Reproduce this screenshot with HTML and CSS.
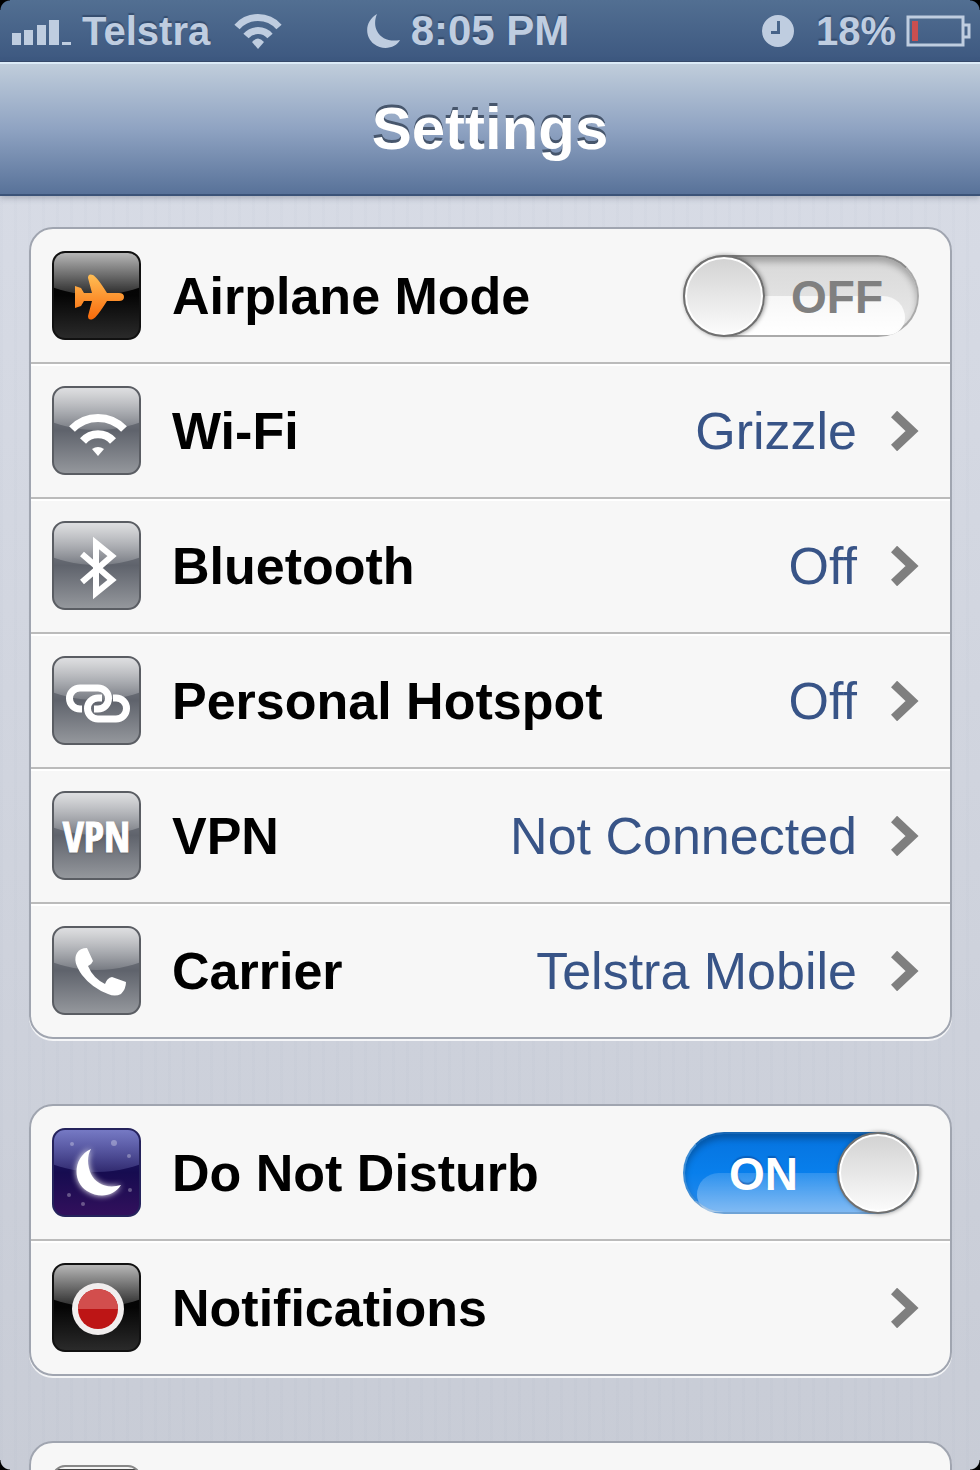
FILE: index.html
```
<!DOCTYPE html>
<html lang="en">

<head>
    <meta charset="utf-8">
    <meta name="viewport" content="width=device-width, initial-scale=1">
    <title>Settings</title>
    <link rel="stylesheet" href="styles.css">
</head>

<body>
    <div class="screen">
        <div class="status-bar">
            <div class="status-left">
                <svg class="signal" width="60" height="26" viewBox="0 0 60 26">
                    <path d="M0 13h9v12H0zM12 10h9v15h-9zM25 5h9v20h-9zM37 0h10v25h-10zM50 22h9v3h-9z" />
                </svg>
                <span>Telstra</span>
                <svg class="status-wifi" width="48" height="36" viewBox="0 0 48 36">
                    <path class="arc" d="M3 14A28 28 0 0 1 45 14M12 23A16 16 0 0 1 36 23" />
                    <path d="M18 29Q24 22 30 29L24 36z" />
                </svg>
                <svg class="status-moon" width="34" height="36" viewBox="0 0 34 36">
                    <path d="M10 1C-2 8-3 23 7 31C16 38 29 35 33 27C23 29 14 26 10 18C7 12 8 6 10 1z" />
                </svg>
            </div>
            <span class="clock">8:05 PM</span>
            <div class="status-right">
                <svg width="32" height="32" viewBox="0 0 32 32">
                    <path fill-rule="evenodd" d="M16 0a16 16 0 1 0 0 32a16 16 0 1 0 0-32zM15 6h3v13H9v-3h6z" />
                </svg>
                <span>18%</span>
                <svg class="battery" width="65" height="32" viewBox="0 0 65 32">
                    <path class="battery-line" d="M2 2h55v28H2zM58 10h5v12h-5" />
                    <path class="battery-level" d="M6 6h6v20H6z" />
                </svg>
            </div>
        </div>

        <header class="nav-bar">
            <h1>Settings</h1>
        </header>

        <main class="content">
            <section class="group">
                <div class="row">
                    <span class="icon icon-black">
                        <svg viewBox="0 0 88 88">
                            <defs>
                                <linearGradient id="orange" x1="0" y1="0" x2="0" y2="1">
                                    <stop offset="0" stop-color="#ffbe55" />
                                    <stop offset="1" stop-color="#f96a0b" />
                                </linearGradient>
                            </defs>
                            <path fill="url(#orange)" d="M21 33L27 35L30 40H38L34 25Q34 20 39 22Q43 24 53 40H65Q70 40 70 44Q70 48 65 48H53Q43 64 39 66Q34 68 34 63L38 48H30L27 53L21 55z" />
                        </svg>
                    </span>
                    <label class="label" for="airplane">Airplane Mode</label>
                    <span class="switch">
                        <input type="checkbox" id="airplane">
                        <span class="switch-text">OFF</span>
                        <span class="knob"></span>
                    </span>
                </div>
                <a class="row" href="#wifi">
                    <span class="icon">
                        <svg viewBox="0 0 88 88">
                            <path class="line line-wide" d="M18 41A36 36 0 0 1 70 41M29 53A20 20 0 0 1 59 53" />
                            <path d="M38 61Q44 57 50 61L44 68z" />
                        </svg>
                    </span>
                    <span class="label">Wi-Fi</span>
                    <span class="value">Grizzle</span>
                    <svg class="chevron" viewBox="0 0 28 40"><path d="M3 3L21 20L3 37" /></svg>
                </a>
                <a class="row" href="#bluetooth">
                    <span class="icon">
                        <svg viewBox="0 0 88 88">
                            <path class="line" d="M28 31L58 57L42 70V20L58 33L28 59" />
                        </svg>
                    </span>
                    <span class="label">Bluetooth</span>
                    <span class="value">Off</span>
                    <svg class="chevron" viewBox="0 0 28 40"><path d="M3 3L21 20L3 37" /></svg>
                </a>
                <a class="row" href="#hotspot">
                    <span class="icon">
                        <svg viewBox="0 0 88 88">
                            <path class="line line-link" d="M28 51H26A10 10 0 0 1 26 30H44A10 10 0 0 1 44 51H40" />
                            <path class="line line-link" d="M59 40H62A10 10 0 0 1 62 61H44A10 10 0 0 1 44 40H48" />
                        </svg>
                    </span>
                    <span class="label">Personal Hotspot</span>
                    <span class="value">Off</span>
                    <svg class="chevron" viewBox="0 0 28 40"><path d="M3 3L21 20L3 37" /></svg>
                </a>
                <a class="row" href="#vpn">
                    <span class="icon"><span class="icon-text">VPN</span></span>
                    <span class="label">VPN</span>
                    <span class="value">Not Connected</span>
                    <svg class="chevron" viewBox="0 0 28 40"><path d="M3 3L21 20L3 37" /></svg>
                </a>
                <a class="row" href="#carrier">
                    <span class="icon">
                        <svg viewBox="0 0 88 88">
                            <path d="M23 25Q26 20 33 20L39 33Q38 36 34 38Q39 50 51 56Q53 50 58 49L72 54Q72 61 67 66Q61 69 54 66Q38 60 28 47Q18 33 23 25z" />
                        </svg>
                    </span>
                    <span class="label">Carrier</span>
                    <span class="value">Telstra Mobile</span>
                    <svg class="chevron" viewBox="0 0 28 40"><path d="M3 3L21 20L3 37" /></svg>
                </a>
            </section>

            <section class="group">
                <div class="row">
                    <span class="icon icon-night">
                        <svg viewBox="0 0 88 88">
                            <g class="stars">
                                <circle cx="18" cy="14" r="2" />
                                <circle cx="60" cy="13" r="3" />
                                <circle cx="75" cy="26" r="2" />
                                <circle cx="76" cy="60" r="2" />
                                <circle cx="15" cy="65" r="2" />
                                <circle cx="29" cy="74" r="2" />
                            </g>
                            <path class="glow" d="M37 19C19 27 18 52 33 61C46 69 60 66 67 55C53 59 42 54 37 44C33 35 33 26 37 19z" />
                        </svg>
                    </span>
                    <label class="label" for="dnd">Do Not Disturb</label>
                    <span class="switch">
                        <input type="checkbox" id="dnd" checked>
                        <span class="switch-text">ON</span>
                        <span class="knob"></span>
                    </span>
                </div>
                <a class="row" href="#notifications">
                    <span class="icon icon-black">
                        <svg viewBox="0 0 88 88">
                            <circle cx="44" cy="44" r="26" fill="#f1eeee" />
                            <circle cx="44" cy="44" r="20" fill="#bd1515" />
                            <path fill="#d24e4d" d="M24 44a20 20 0 0 1 40 0z" />
                        </svg>
                    </span>
                    <span class="label">Notifications</span>
                    <svg class="chevron" viewBox="0 0 28 40"><path d="M3 3L21 20L3 37" /></svg>
                </a>
            </section>

            <section class="group">
                <div class="row">
                    <span class="icon icon-plain"></span>
                </div>
            </section>
        </main>
        <span class="corner corner-tl"></span>
        <span class="corner corner-tr"></span>
        <span class="corner corner-bl"></span>
        <span class="corner corner-br"></span>
    </div>
</body>

</html>
```
FILE: styles.css
```
* {
    box-sizing: border-box;
}

body {
    margin: 0;
    font-family: "Liberation Sans", Helvetica, Arial, sans-serif;
}

.screen {
    position: relative;
    height: 100vh;
    overflow: hidden;
    display: flex;
    flex-direction: column;
    /* pinstripes over a soft vertical fade */
    background:
        repeating-linear-gradient(90deg, rgba(90, 110, 140, 0.02) 0 3px, transparent 3px 14px),
        linear-gradient(#d9dde7, #c8ccd6);
}

/* status bar */
.status-bar {
    flex: none;
    display: grid;
    grid-template-columns: 1fr auto 1fr;
    align-items: center;
    column-gap: 10px;
    height: 62px;
    padding: 0 9px;
    border-bottom: 1px solid #35496c;
    background: linear-gradient(#526f92, #3d5880);
    color: #bfcde0;
    font-size: 40px;
    font-weight: bold;
    line-height: 60px;
    text-shadow: 0 -2px 1px rgba(30, 50, 80, 0.5);
}

.status-bar svg {
    flex: none;
    fill: #bfcde0;
}

.status-left,
.status-right {
    display: flex;
    align-items: center;
    gap: 10px;
}

.status-left {
    padding-left: 3px;
}

.status-right {
    justify-content: flex-end;
}

.status-right span {
    margin-left: 12px;
}

.signal {
    margin-top: 4px;
}

.status-wifi {
    margin-left: 14px;
}

.status-moon {
    margin-left: auto;
}

.clock {
    font-size: 42px;
}

.status-bar .arc {
    fill: none;
    stroke: #bfcde0;
    stroke-width: 7;
}

.status-bar .battery-line {
    fill: none;
    stroke: #bfcde0;
    stroke-width: 3;
}

.status-bar .battery-level {
    fill: #c94f50;
}

/* title bar */
.nav-bar {
    flex: none;
    z-index: 1;
    height: 134px;
    border-top: 2px solid #dcebf7;
    border-bottom: 2px solid #3b5378;
    background: linear-gradient(#c0cddb, #8fa3c2 50%, #587299);
    box-shadow: 0 2px 6px rgba(70, 80, 100, 0.35);
    text-align: center;
}

.nav-bar h1 {
    margin: 0;
    color: #fff;
    font-size: 60px;
    line-height: 130px;
    text-shadow: 0 -3px 0 #47566c;
}

/* setting groups */
.content {
    flex: 1;
    min-height: 0;
    display: flex;
    flex-direction: column;
    gap: 65px;
    padding: 31px 28px 0 29px;
}

.group {
    flex: none;
    border: 2px solid #a0a5b0;
    border-radius: 24px;
    background: #f7f7f7;
    box-shadow: 0 2px 0 rgba(255, 255, 255, 0.8);
}

.row {
    display: flex;
    align-items: center;
    height: 135px;
    padding: 0 31px 0 21px;
    border-bottom: 2px solid #bbb;
    color: #000;
    font-size: 52px;
    text-decoration: none;
}

.row + .row {
    box-shadow: inset 0 2px 0 #fff;
}

.row:last-child {
    height: 133px;
    border-bottom: 0;
}

.label {
    flex: 1;
    margin-left: 31px;
    font-weight: bold;
    white-space: nowrap;
}

.value {
    color: #385487;
    white-space: nowrap;
}

.chevron {
    flex: none;
    width: 28px;
    height: 40px;
    margin-left: 34px;
    fill: none;
    stroke: #7f7f7f;
    stroke-width: 9;
}

/* glossy icons */
.icon {
    position: relative;
    flex: none;
    display: grid;
    place-items: center;
    width: 89px;
    height: 89px;
    border: 2px solid #5a5d63;
    border-radius: 13px;
    overflow: hidden;
    background: linear-gradient(#8a8d94, #5f636c 50%, #94979c);
}

.icon::before {
    content: "";
    position: absolute;
    top: -60px;
    left: -40px;
    right: -40px;
    height: 102px;
    border-radius: 50%;
    background: linear-gradient(rgba(255, 255, 255, 0.7) 60%, rgba(255, 255, 255, 0.15));
}

.icon svg {
    position: relative;
    width: 88px;
    height: 88px;
    fill: #fff;
}

.icon .line {
    fill: none;
    stroke: #fff;
    stroke-width: 6;
}

.icon .line-link {
    stroke-width: 7;
}

.icon .line-wide {
    stroke-width: 8;
}

.icon-text {
    position: relative;
    color: #fff;
    font-family: "Liberation Sans Narrow", "Open Sans Condensed", "Liberation Sans", sans-serif;
    font-size: 42px;
    font-weight: bold;
    -webkit-text-stroke: 1px #fff;
    text-shadow: 0 1px 2px #555;
}

.icon-black {
    border-color: #111;
    background: linear-gradient(#000, #050505 50%, #2a2a2a);
}

.icon-night {
    border-color: #25235c;
    background: linear-gradient(#24247a, #160c50 50%, #32105c);
}

.icon-night::before {
    background: linear-gradient(rgba(150, 155, 225, 0.7) 60%, rgba(110, 110, 180, 0.3));
}

/* black picture under a light frame */
.icon-plain {
    border-color: #888;
    background: linear-gradient(#f4f4f4 2px, #444 2px);
}

.icon-plain::before {
    display: none;
}

.stars {
    opacity: 0.3;
}

.glow {
    filter: drop-shadow(0 0 3px #fff);
}

/* switches */
.switch {
    position: relative;
    flex: none;
    width: 236px;
    height: 82px;
}

.switch input {
    appearance: none;
    width: 100%;
    height: 100%;
    margin: 0;
    display: block;
    border: 2px solid #aaa;
    border-top-color: #888;
    border-radius: 41px;
    background: linear-gradient(#d8d8d8, #ebebeb);
    box-shadow: inset 0 5px 6px rgba(0, 0, 0, 0.25);
}

.switch input:checked {
    border-color: #1767b5 #3d8cd4 #6fa3d6;
    background: linear-gradient(#0673df, #087fec 50%, #2b8cec);
}

/* lower highlight of the track */
.switch input::after {
    content: "";
    position: absolute;
    left: 14px;
    right: 14px;
    bottom: 2px;
    height: 39px;
    border-radius: 30px 30px 24px 24px;
    background: linear-gradient(rgba(255, 255, 255, 0.7), #fff);
}

.switch input:checked::after {
    background: linear-gradient(rgba(255, 255, 255, 0.15), rgba(255, 255, 255, 0.4));
}

.switch-text {
    position: absolute;
    top: 1px;
    right: 36px;
    color: #808080;
    font-size: 46px;
    font-weight: bold;
    line-height: 82px;
    pointer-events: none;
}

.knob {
    position: absolute;
    top: 0;
    left: 0;
    width: 82px;
    height: 82px;
    border: 2px solid #707070;
    border-radius: 50%;
    background: linear-gradient(#d2d2d2, #fcfcfc);
    box-shadow: inset 0 0 0 2px #fff, 1px 0 4px rgba(0, 0, 0, 0.4);
    pointer-events: none;
}

.switch input:checked ~ .switch-text {
    left: 46px;
    right: auto;
    color: #fff;
    text-shadow: 0 -2px 1px rgba(10, 70, 150, 0.5);
}

.switch input:checked ~ .knob {
    left: auto;
    right: 0;
}

/* black rounded corners of the screen */
.corner {
    position: absolute;
    z-index: 2;
    width: 10px;
    height: 10px;
}

.corner-tl {
    top: 0;
    left: 0;
    background: radial-gradient(circle at 100% 100%, transparent 9px, #000 10px);
}

.corner-tr {
    top: 0;
    right: 0;
    background: radial-gradient(circle at 0 100%, transparent 9px, #000 10px);
}

.corner-bl {
    bottom: 0;
    left: 0;
    background: radial-gradient(circle at 100% 0, transparent 9px, #000 10px);
}

.corner-br {
    right: 0;
    bottom: 0;
    background: radial-gradient(circle at 0 0, transparent 9px, #000 10px);
}
```
